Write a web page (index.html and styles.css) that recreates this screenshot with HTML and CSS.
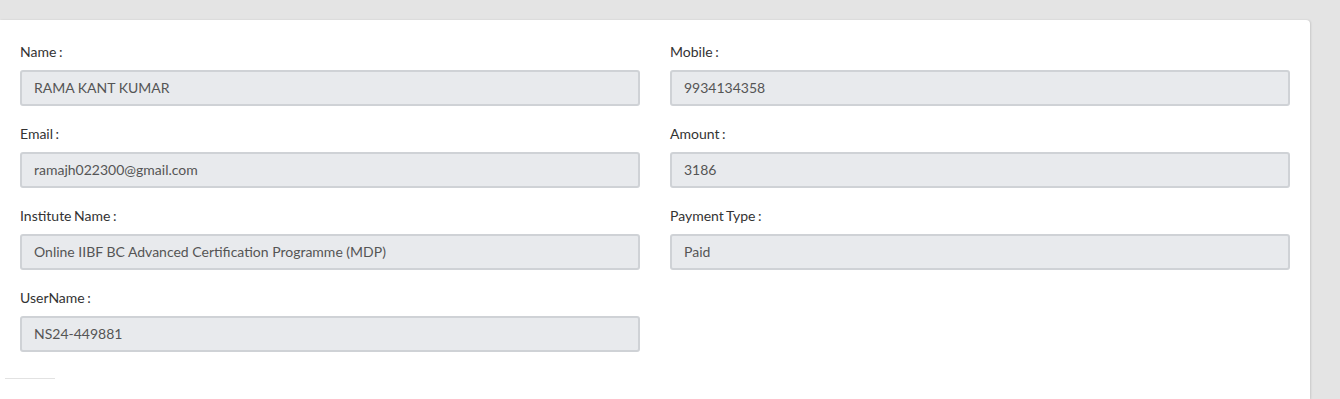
FILE: index.html
```html
<!DOCTYPE html>
<html>
<head>
<meta charset="utf-8">
<link rel="stylesheet" href="styles.css">
</head>
<body>
<div class="page">
  <div class="card">
    <div class="grid">
      <div class="field">
        <label class="label">Name :</label>
        <div class="input">RAMA KANT KUMAR</div>
      </div>
      <div class="field">
        <label class="label">Mobile :</label>
        <div class="input">9934134358</div>
      </div>
      <div class="field">
        <label class="label">Email :</label>
        <div class="input">ramajh022300@gmail.com</div>
      </div>
      <div class="field">
        <label class="label">Amount :</label>
        <div class="input">3186</div>
      </div>
      <div class="field">
        <label class="label">Institute Name :</label>
        <div class="input">Online IIBF BC Advanced Certification Programme (MDP)</div>
      </div>
      <div class="field">
        <label class="label">Payment Type :</label>
        <div class="input">Paid</div>
      </div>
      <div class="field">
        <label class="label">UserName :</label>
        <div class="input">NS24-449881</div>
      </div>
    </div>
    <div class="rule"></div>
  </div>
</div>
</body>
</html>
```
FILE: styles.css
```css
html, body {
  margin: 0;
  padding: 0;
  background: #e4e4e4;
  font-family: Lato, "Open Sans", sans-serif;
  overflow: hidden;
}
.page {
  padding-top: 20px;
  width: 1310px;
}
.card {
  background: #fff;
  border-top-right-radius: 4px;
  box-shadow: 1px 0 2px rgba(0,0,0,0.12);
  padding: 22px 20px 20px 20px;
  height: 379px;
  box-sizing: border-box;
}
.grid {
  display: grid;
  grid-template-columns: 620px 620px;
  column-gap: 30px;
  row-gap: 18px;
}
.field {
  display: flex;
  flex-direction: column;
}
.label {
  font-size: 14px;
  line-height: 20px;
  color: #333;
  margin-bottom: 8px;
  word-spacing: -1px;
}
.input {
  box-sizing: border-box;
  height: 36px;
  background: #e8eaed;
  border: 2px solid #cfd2d6;
  border-radius: 3px;
  padding: 0 12px;
  font-size: 14px;
  line-height: 32px;
  color: #555;
}
.rule {
  margin: 26px 0 0 -15px;
  width: 50px;
  height: 1px;
  background: #e2e2e2;
}
```
